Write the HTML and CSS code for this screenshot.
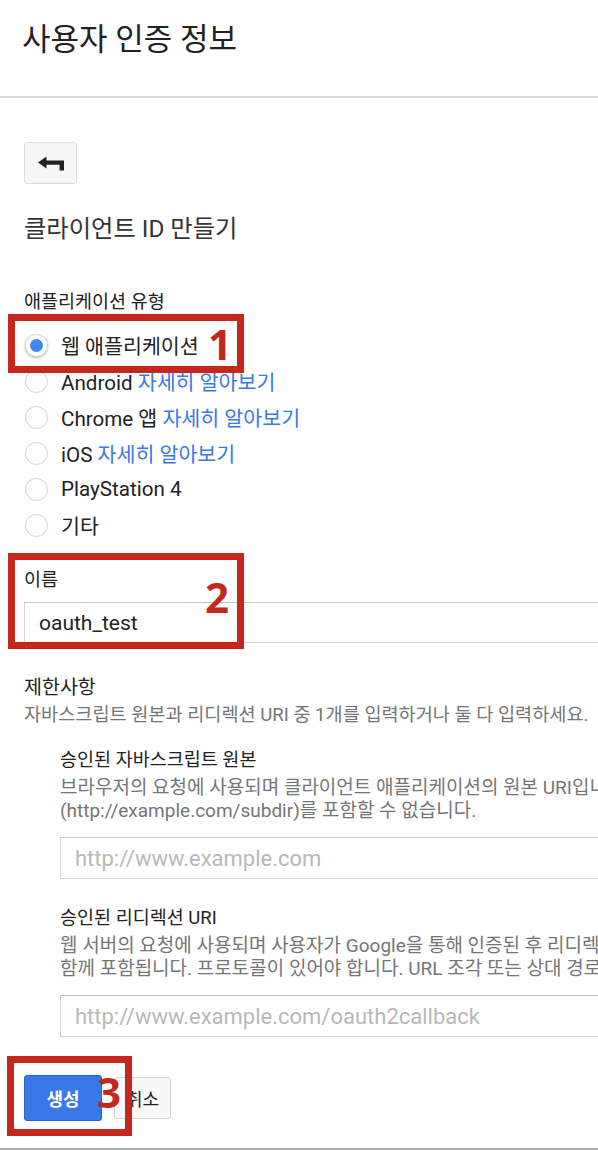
FILE: index.html
```html
<!DOCTYPE html>
<html lang="ko">
<head>
<meta charset="utf-8">
<title>사용자 인증 정보</title>
<link rel="stylesheet" href="styles.css">
</head>
<body>
<div class="page">
  <header class="header">
    <h1 class="title">사용자 인증 정보</h1>
  </header>
  <main class="content">
    <button class="back" type="button" aria-label="뒤로">
      <svg width="26" height="15" viewBox="0 0 26 15"><path d="M0 6.5 L8.5 0.5 L8.5 4.5 L26 4.5 L26 14.5 L21.5 14.5 L21.5 8.7 L8.5 8.7 L8.5 12.5 Z" fill="#222"/></svg>
    </button>
    <h2 class="heading">클라이언트 ID 만들기</h2>
    <div class="label type-label">애플리케이션 유형</div>
    <ul class="radios">
      <li class="radio-row"><span class="radio checked"></span><span>웹 애플리케이션</span></li>
      <li class="radio-row"><span class="radio"></span><span>Android <a class="link">자세히 알아보기</a></span></li>
      <li class="radio-row"><span class="radio"></span><span>Chrome 앱 <a class="link">자세히 알아보기</a></span></li>
      <li class="radio-row"><span class="radio"></span><span>iOS <a class="link">자세히 알아보기</a></span></li>
      <li class="radio-row"><span class="radio"></span><span>PlayStation 4</span></li>
      <li class="radio-row"><span class="radio"></span><span>기타</span></li>
    </ul>
    <div class="label name-label">이름</div>
    <div class="input name-input">oauth_test</div>

    <div class="section-title">제한사항</div>
    <div class="desc section-desc">자바스크립트 원본과 리디렉션 URI 중 1개를 입력하거나 둘 다 입력하세요.</div>

    <div class="sub">
      <div class="sub-title">승인된 자바스크립트 원본</div>
      <div class="desc sub-desc">
        <div class="line">브라우저의 요청에 사용되며 클라이언트 애플리케이션의 원본 URI입니다. 와일드카드(https://*.example.com) 또는 경로</div>
        <div class="line">(http://example.com/subdir)를 포함할 수 없습니다.</div>
      </div>
      <div class="input placeholder">http://www.example.com</div>

      <div class="sub-title second">승인된 리디렉션 URI</div>
      <div class="desc sub-desc">
        <div class="line">웹 서버의 요청에 사용되며 사용자가 Google을 통해 인증된 후 리디렉션되는 애플리케이션의 경로입니다. 경로에 액세스를 위한 승인 코드가</div>
        <div class="line">함께 포함됩니다. 프로토콜이 있어야 합니다. URL 조각 또는 상대 경로를 포함할 수 없습니다. 공개 IP 주소는 사용할 수 없습니다.</div>
      </div>
      <div class="input placeholder">http://www.example.com/oauth2callback</div>
    </div>

    <div class="actions">
      <button class="btn primary" type="button">생성</button>
      <button class="btn secondary" type="button">취소</button>
    </div>
  </main>
  <div class="footer-bar"></div>

  <div class="mark mark-1"></div>
  <div class="num num-1">1</div>
  <div class="mark mark-2"></div>
  <div class="num num-2">2</div>
  <div class="mark mark-3"></div>
  <div class="num num-3">3</div>
</div>
</body>
</html>
```

FILE: styles.css
```css
* { box-sizing: border-box; }
html, body { margin: 0; padding: 0; }
body {
  width: 598px;
  overflow: hidden;
  background: #fff;
  color: #212121;
  font-family: Roboto, "Noto Sans CJK KR", sans-serif;
}
.page {
  position: relative;
  width: 598px;
  height: 1150px;
  overflow: hidden;
}
.header {
  height: 98px;
  border-bottom: 2px solid #dadada;
  padding: 20px 0 0 22px;
}
.title {
  margin: 0;
  font-size: 31px;
  font-weight: 400;
  line-height: 40px;
  color: #222;
}
.content {
  width: 780px;
  padding: 44px 0 0 24px;
}
.back {
  display: flex;
  align-items: center;
  justify-content: center;
  width: 53px;
  height: 42px;
  padding: 0;
  border: 1px solid #dcdcdc;
  border-radius: 3px;
  background: #f7f7f7;
}
.heading {
  margin: 30px 0 0;
  font-size: 24.3px;
  font-weight: 400;
  line-height: 30px;
  color: #333;
}
.label {
  font-size: 18.5px;
  line-height: 24px;
  color: #222;
}
.type-label { margin-top: 46px; }
.radios {
  list-style: none;
  margin: 13px 0 0;
  padding: 0;
}
.radio-row {
  display: flex;
  align-items: center;
  height: 36px;
  font-size: 20.6px;
  color: #222;
}
.radio {
  flex: none;
  width: 23px;
  height: 23px;
  margin: 0 13px 0 1px;
  border: 1.5px solid #cfcfcf;
  border-radius: 50%;
  background: #fff;
  display: flex;
  align-items: center;
  justify-content: center;
}
.radio.checked {
  border-color: #d6d6d6;
  box-shadow: 0 1px 3px rgba(0, 0, 0, 0.25);
}
.radio.checked::after {
  content: "";
  width: 13px;
  height: 13px;
  border-radius: 50%;
  background: #4285f4;
}
.link { color: #3b78e7; text-decoration: none; }
.name-label { margin-top: 25px; }
.input {
  height: 42px;
  margin-top: 10px;
  padding: 0 14px;
  border: 1px solid #d4d4d4;
  border-top-color: #c4c4c4;
  display: flex;
  align-items: center;
  font-size: 21px;
  color: #222;
  background: #fff;
}
.name-input { height: 41px; }
.placeholder {
  margin-top: 15px;
  color: #b8b8b8;
  font-size: 22px;
}
.section-title {
  margin-top: 32px;
  font-size: 19.5px;
  line-height: 26px;
  color: #222;
}
.desc {
  font-size: 19px;
  color: #757575;
  white-space: nowrap;
}
.section-desc { margin-top: 1px; line-height: 26px; font-size: 18.6px; }
.sub { padding-left: 36px; }
.sub-title {
  margin-top: 19px;
  font-size: 18.5px;
  line-height: 26px;
  color: #222;
}
.sub-title.second { margin-top: 26px; }
.sub-desc { margin-top: 3px; line-height: 23px; }
.actions {
  display: flex;
  align-items: center;
  gap: 12px;
  margin: 38px 0 27px;
}
.btn {
  font-family: Roboto, "Noto Sans CJK KR", sans-serif;
  font-size: 18px;
  border-radius: 3px;
  padding: 0;
}
.primary {
  width: 78px;
  height: 46px;
  background: #3b78e7;
  border: 1px solid #2a63cf;
  color: #fff;
  font-weight: 700;
}
.secondary {
  width: 57px;
  height: 42px;
  background: #f8f8f8;
  border: 1px solid #d6d6d6;
  color: #222;
}
.footer-bar {
  height: 20px;
  background: #a9afb4;
}
.mark {
  position: absolute;
  border: 7px solid #c4281c;
}
.mark-1 { left: 8px; top: 314px; width: 236px; height: 59px; }
.mark-2 { left: 8px; top: 553px; width: 236px; height: 96px; }
.mark-3 { left: 7px; top: 1056px; width: 125px; height: 80px; }
.num {
  position: absolute;
  font-family: "Open Sans", sans-serif;
  font-weight: 700;
  font-size: 42px;
  line-height: 42px;
  color: #c4281c;
}
.num-1 { left: 208px; top: 323px; }
.num-2 { left: 205px; top: 576px; }
.num-3 { left: 97px; top: 1071px; }
```
